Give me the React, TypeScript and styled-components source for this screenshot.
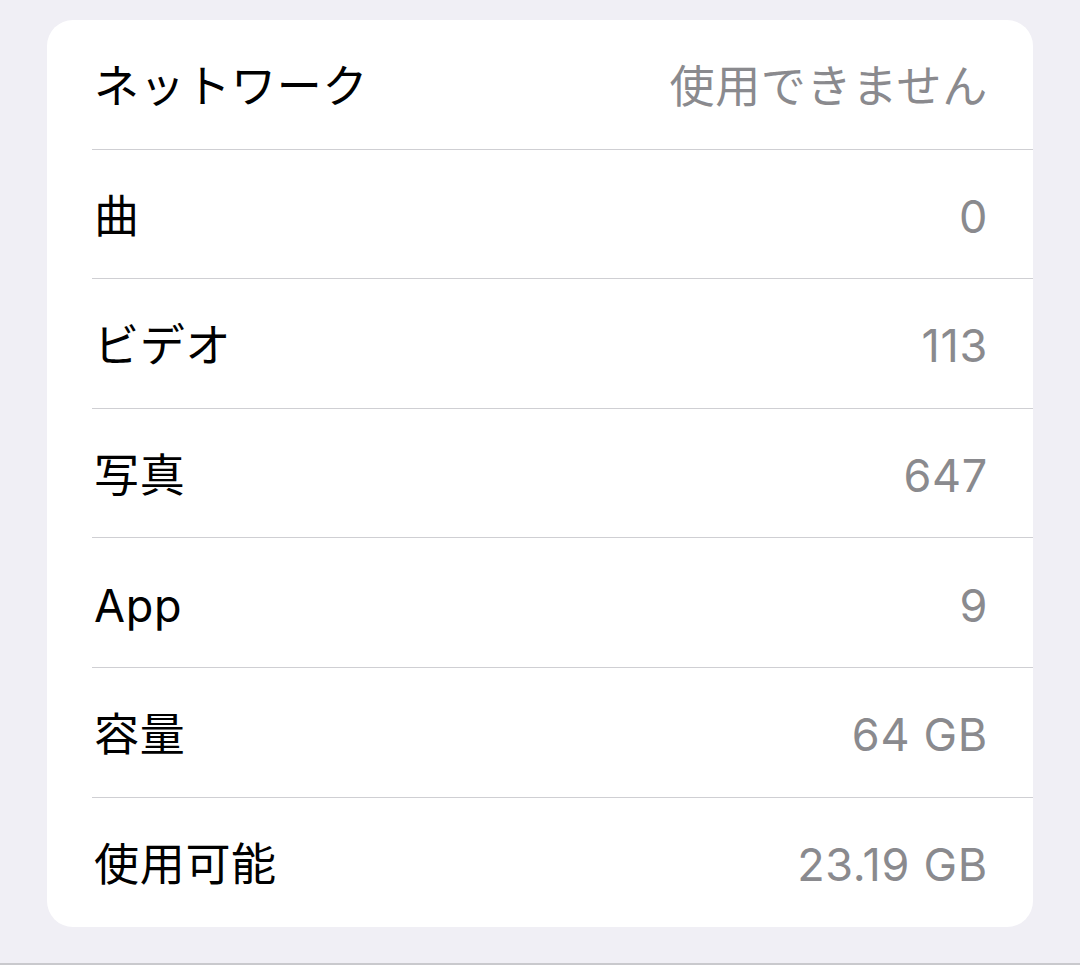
import React from "react";
import styled, { createGlobalStyle } from "styled-components";

const Global = createGlobalStyle`
  html, body { margin: 0; padding: 0; background: #f0eff5; }
  body { font-family: Inter, "Noto Sans CJK JP", sans-serif; }
`;

const Screen = styled.div`
  box-sizing: border-box;
  height: 965px;
  padding: 20px 47px 0 47px;
  background: #f0eff5;
  border-bottom: 2px solid #c9c9cd;
`;

const Card = styled.div`
  background: #ffffff;
  border-radius: 26px;
  overflow: hidden;
  padding-left: 45px;
`;

const Row = styled.div<{ $last?: boolean }>`
  box-sizing: border-box;
  height: 129.6px;
  display: flex;
  align-items: center;
  justify-content: space-between;
  padding: 5px 45px 0 0;
  border-bottom: ${(p) => (p.$last ? "none" : "1.5px solid #cfcfd3")};
  font-size: 45px;
  line-height: 1;
  letter-spacing: 0.7px;
`;

const Label = styled.span`
  color: #000000;
  margin-left: 2px;
`;

const Value = styled.span`
  color: #8a8a8e;
`;

const rows: [string, string][] = [
  ["ネットワーク", "使用できません"],
  ["曲", "0"],
  ["ビデオ", "113"],
  ["写真", "647"],
  ["App", "9"],
  ["容量", "64 GB"],
  ["使用可能", "23.19 GB"],
];

export default function App() {
  return (
    <>
      <Global />
      <Screen>
        <Card>
          {rows.map(([l, v], i) => (
            <Row key={l} $last={i === rows.length - 1}>
              <Label>{l}</Label>
              <Value>{v}</Value>
            </Row>
          ))}
        </Card>
      </Screen>
    </>
  );
}
